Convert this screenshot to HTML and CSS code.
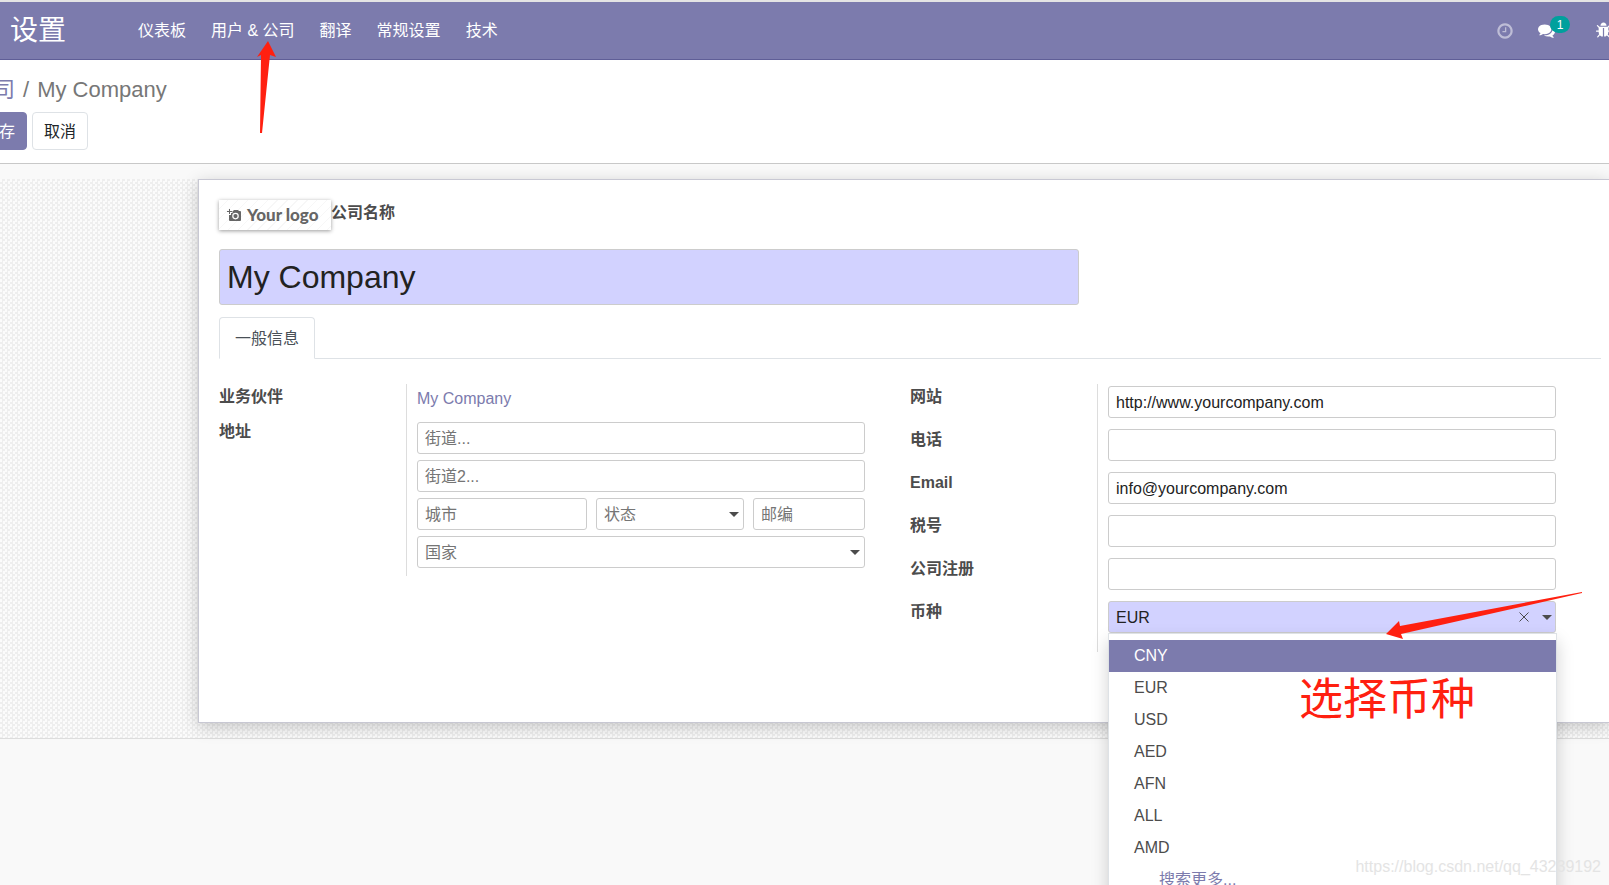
FILE: index.html
```html
<!DOCTYPE html>
<html lang="zh-CN">
<head>
<meta charset="utf-8">
<meta name="viewport" content="width=device-width, initial-scale=1">
<title>My Company - 设置</title>
<link rel="stylesheet" href="styles.css">
</head>
<body>
<div class="page">
  <header class="navbar">
    <a class="brand" href="#">设置</a>
    <nav class="menu">
      <a href="#">仪表板</a>
      <a href="#">用户 &amp; 公司</a>
      <a href="#">翻译</a>
      <a href="#">常规设置</a>
      <a href="#">技术</a>
    </nav>
    <div class="systray">
      <button class="tray-btn dim" type="button" aria-label="活动">
        <svg class="icon" viewBox="0 0 1792 1792"><path d="M1024 544v448q0 14-9 23t-23 9h-320q-14 0-23-9t-9-23v-64q0-14 9-23t23-9h224v-352q0-14 9-23t23-9h64q14 0 23 9t9 23zm416 352q0-148-73-273t-198-198-273-73-273 73-198 198-73 273 73 273 198 198 273 73 273-73 198-198 73-273zm224 0q0 209-103 385.500t-279.500 279.500-385.500 103-385.500-103-279.500-279.500-103-385.500 103-385.500 279.500-279.500 385.500-103 385.500 103 279.500 279.500 103 385.500z"/></svg>
      </button>
      <button class="tray-btn" type="button" aria-label="消息">
        <svg class="icon" viewBox="0 0 1792 1792"><path d="M1408 768q0 139-94 257t-256.500 186.500-353.500 68.500q-86 0-176-16-124 88-278 128-36 9-86 16h-3q-11 0-20.500-8t-11.500-21q-1-3-1-6.500t.5-6.500 2-6l2.500-5 3.500-5.500 4-5 4.500-5 4-4.500q5-6 23-25t26-29.500 22.500-29 25-38.500 20.500-44q-124-72-195-177t-71-224q0-139 94-257t256.500-186.500 353.500-68.500 353.500 68.500 256.500 186.500 94 257zm384 256q0 120-71 224.500t-195 176.500q10 24 20.500 44t25 38.500 22.500 29 26 29.500 23 25q1 1 4 4.500t4.500 5 4 5 3.500 5.500l2.500 5 2 6 .5 6.500-1 6.500q-3 14-13 22t-22 7q-50-7-86-16-154-40-278-128-90 16-176 16-271 0-472-132 58 4 88 4 161 0 309-45t264-129q125-92 192-212t67-254q0-77-23-152 129 71 204 178t75 230z"/></svg>
        <span class="badge">1</span>
      </button>
      <button class="tray-btn" type="button" aria-label="调试">
        <svg class="icon" viewBox="0 0 1792 1792"><path d="M1696 960q0 26-19 45t-45 19h-224q0 171-67 290l208 209q19 19 19 45t-19 45q-18 19-45 19t-45-19l-198-197q-5 5-15 13t-42 28.500-65 36.500-82 29-97 13v-896h-128v896q-51 0-101.500-13.500t-87-33-66-39-43.500-32.500l-15-14-183 207q-20 21-48 21-24 0-43-16-19-18-20.500-44.500t15.500-46.500l202-227q-58-114-58-274h-224q-26 0-45-19t-19-45 19-45 45-19h224v-294l-173-173q-19-19-19-45t19-45 45-19 45 19l173 173h844l173-173q19-19 45-19t45 19 19 45-19 45l-173 173v294h224q26 0 45 19t19 45zm-480-576h-640q0-133 93.500-226.500t226.500-93.500 226.500 93.500 93.500 226.500z"/></svg>
      </button>
    </div>
  </header>

  <section class="control-panel">
    <div class="breadcrumb"><a href="#">公司</a><span class="sep">/</span><span>My Company</span></div>
    <div class="actions">
      <button class="btn primary" type="button">保存</button>
      <button class="btn" type="button">取消</button>
    </div>
  </section>

  <main class="content">
    <form class="form-view">
      <div class="sheet">
        <div class="heading">
          <div class="logo">
            <svg class="camera" viewBox="0 0 14 13"><path fill-rule="evenodd" d="M2 0h1v2h2v1H3v2H2V3H0V2h2zM5.500 2H6l1-1h4l1 1h1q1 0 1 1v8q0 1-1 1H3q-1 0-1-1V6h2V4h1.500zM8.500 3.800a3.300 3.300 0 1 0 0 6.600 3.300 3.300 0 0 0 0-6.600zM8.500 5a2.100 2.100 0 1 1 0 4.200 2.100 2.100 0 0 1 0-4.200z"/><circle cx="8.500" cy="7.100" r="1"/></svg>
            <span>Your logo</span>
          </div>
          <label class="label" for="name">公司名称</label>
        </div>
        <input class="field name required" id="name" type="text" value="My Company">
        <div class="tabs"><button class="tab" type="button">一般信息</button></div>

        <div class="groups">
          <div class="group">
            <div class="row short">
              <span class="label">业务伙伴</span>
              <div class="cell partner"><a href="#">My Company</a></div>
            </div>
            <div class="row">
              <label class="label" for="street">地址</label>
              <div class="cell address">
                <input class="field" id="street" type="text" placeholder="街道...">
                <input class="field" type="text" placeholder="街道2..." aria-label="街道2">
                <div class="city-row">
                  <input class="field" type="text" placeholder="城市" aria-label="城市">
                  <select class="field" aria-label="状态"><option>状态</option></select>
                  <input class="field" type="text" placeholder="邮编" aria-label="邮编">
                </div>
                <select class="field" aria-label="国家"><option>国家</option></select>
              </div>
            </div>
          </div>

          <div class="group">
            <div class="row"><label class="label" for="website">网站</label><div class="cell"><input class="field" id="website" type="text" value="http://www.yourcompany.com"></div></div>
            <div class="row"><label class="label" for="phone">电话</label><div class="cell"><input class="field" id="phone" type="text"></div></div>
            <div class="row"><label class="label" for="email">Email</label><div class="cell"><input class="field" id="email" type="text" value="info@yourcompany.com"></div></div>
            <div class="row"><label class="label" for="vat">税号</label><div class="cell"><input class="field" id="vat" type="text"></div></div>
            <div class="row"><label class="label" for="registry">公司注册</label><div class="cell"><input class="field" id="registry" type="text"></div></div>
            <div class="row">
              <label class="label" for="currency">币种</label>
              <div class="cell">
                <div class="combo">
                  <input class="field required" id="currency" type="text" value="EUR" role="combobox" aria-expanded="true" aria-controls="currency-list">
                  <div class="combo-icons">
                    <svg class="clear" viewBox="0 0 10 10"><path d="M.5.5l9 9M9.500.5l-9 9"/></svg>
                    <svg class="caret" viewBox="0 0 10 5"><path d="M0 0h10L5 5z"/></svg>
                  </div>
                  <ul class="options" id="currency-list" role="listbox">
                    <li class="active" role="option" aria-selected="true">CNY</li>
                    <li role="option">EUR</li>
                    <li role="option">USD</li>
                    <li role="option">AED</li>
                    <li role="option">AFN</li>
                    <li role="option">ALL</li>
                    <li role="option">AMD</li>
                    <li class="more" role="option">搜索更多...</li>
                  </ul>
                  <div class="note">选择币种</div>
                  <svg class="arrow-currency" viewBox="0 0 200 48"><path d="M1 42L14 29l1 5L197 0v1L16 42l2 5z"/></svg>
                </div>
              </div>
            </div>
          </div>
        </div>
      </div>
    </form>
  </main>

  <svg class="arrow-menu" viewBox="0 0 20 94"><path d="M11 1l8 16-6-2-8 78H3L4 15l-4 2z"/></svg>
  <div class="watermark">https://blog.csdn.net/qq_43239192</div>
</div>
</body>
</html>
```

FILE: styles.css
```css
* { box-sizing: border-box; }

body {
  margin: 0;
  overflow: hidden;
  background: #f9f9f9;
  color: #4c4c4c;
  font: 16px/24px "Liberation Sans", "Noto Sans CJK SC", sans-serif;
}

a { color: #7c7bad; text-decoration: none; }
button, input, select { font: inherit; }

.page {
  position: relative;
  min-height: 100vh;
  overflow: hidden;
}

/* Top navigation */
.navbar {
  display: flex;
  align-items: center;
  height: 60px;
  border-top: 2px solid #e4e4e4;
  border-bottom: 1px solid #5f5e97;
  background: #7c7bad;
}
.navbar a { color: #fff; }
.brand {
  width: 128px;
  padding-left: 10px;
  font-size: 28px;
  line-height: 40px;
}
.menu { display: flex; }
.menu a { padding: 0 15px 0 10px; }
.systray {
  display: flex;
  gap: 24px;
  margin-left: auto;
  margin-right: -3px;
}
.tray-btn {
  position: relative;
  display: flex;
  align-items: center;
  padding: 0;
  border: 0;
  background: none;
  color: #fff;
}
.tray-btn + .tray-btn + .tray-btn { margin-left: 16px; }
.tray-btn.dim { opacity: .5; }
.icon { width: 17px; height: 17px; fill: currentColor; }
.dim .icon { width: 18px; height: 18px; }
.badge {
  position: absolute;
  top: -6px;
  left: 12px;
  width: 20px;
  height: 17px;
  border-radius: 9px;
  background: #00a09d;
  font-size: 12px;
  line-height: 18px;
}

/* Control panel: starts left of the window edge */
.control-panel {
  height: 104px;
  padding-top: 16px;
  border-bottom: 1px solid #c8c8c8;
  background: #fff;
}
.breadcrumb {
  margin-left: -29px;
  font-size: 22px;
  line-height: 28px;
  color: #777;
}
.breadcrumb .sep { padding: 0 8px; }
.actions {
  display: flex;
  gap: 5px;
  margin: 8px 0 0 -29px;
}
.btn {
  height: 38px;
  padding: 1px 11px 0;
  border: 1px solid #dee2e6;
  border-radius: 4px;
  background: #fff;
  color: #212529;
}
.btn.primary { border-color: #7c7bad; background: #7c7bad; color: #fff; }

/* Form */
.content { padding-top: 15px; }
.form-view {
  padding: 0 0 15px 198px;
  border-bottom: 1px solid #ddd;
  background: repeating-conic-gradient(#eeeeee 0 25%, #fbfbfb 0 50%) 0 0 / 5px 5px;
}
.sheet {
  padding: 20px 8px 70px 20px;
  border: 1px solid #c8c8d3;
  border-right: 0;
  background: #fff;
  box-shadow: 0 4px 16px rgba(0, 0, 0, .2);
}
.heading {
  display: flex;
  margin-bottom: 19px;
}
.logo {
  display: flex;
  align-items: center;
  gap: 6px;
  width: 112px;
  height: 30px;
  padding-left: 8px;
  background: repeating-linear-gradient(135deg, #fff 0 6px, #f7f7f7 6px 7px);
  box-shadow: 0 1px 4px rgba(0, 0, 0, .4);
  color: #666;
  font: 900 17px/30px Lato, sans-serif;
}
.camera { width: 14px; height: 13px; fill: #666; }

.field {
  display: block;
  width: 100%;
  min-width: 0;
  height: 32px;
  padding: 1px 7px 0;
  border: 1px solid #ccc;
  border-radius: 3px;
  outline: 0;
  background: #fff;
  color: #222;
}
.field::placeholder { color: #757575; opacity: 1; }
.field.required { background: #d2d2ff; }
.field.name {
  width: 62.25%;
  height: 56px;
  font-size: 32px;
}
select.field {
  appearance: none;
  color: #757575;
  background: #fff url("data:image/svg+xml,%3Csvg xmlns='http://www.w3.org/2000/svg' viewBox='0 0 10 5'%3E%3Cpath fill='%234c4c4c' d='M0 0h10L5 5z'/%3E%3C/svg%3E") no-repeat right 4px center / 10px 5px;
}

.tabs {
  display: flex;
  margin: 12px 0 25px;
  border-bottom: 1px solid #dee2e6;
}
.tab {
  height: 42px;
  margin-bottom: -1px;
  padding: 1px 15px 0;
  border: 1px solid #dee2e6;
  border-bottom-color: #fff;
  border-radius: 4px 4px 0 0;
  background: #fff;
  color: #495057;
}

.groups {
  display: grid;
  grid-template-columns: 1fr 1fr;
  align-items: start;
}
.group { padding-right: 45px; }
.row { display: grid; grid-template-columns: 187px 1fr; }
.label { padding-top: 1px; font-weight: 700; }
.cell {
  padding: 2px 0 9px 10px;
  border-left: 1px solid #ddd;
}
.cell.partner { padding-top: 3px; }
.row.short { height: 35px; }
.address {
  display: grid;
  gap: 6px;
  padding: 3px 0 8px 10px;
}
.city-row {
  display: grid;
  grid-template-columns: 170fr 148fr 112fr;
  gap: 9px;
}
.group > .row:last-child .cell:not(.address) { padding-bottom: 19px; }

/* Currency drop-down */
.combo { position: relative; }
.combo-icons {
  position: absolute;
  top: 0;
  right: 4px;
  display: flex;
  align-items: center;
  gap: 13px;
  height: 32px;
}
.clear { width: 10px; height: 10px; fill: none; stroke: #4c4c4c; }
.caret { width: 10px; height: 5px; fill: #4c4c4c; }
.options {
  position: absolute;
  top: 32px;
  left: 0;
  right: -1px;
  z-index: 1;
  margin: 0;
  padding: 6px 0;
  border: 1px solid #dee2e6;
  background: #fff;
  box-shadow: 0 8px 16px rgba(0, 0, 0, .18);
  list-style: none;
}
.options li { padding: 4px 25px; }
.options .active { background: #7c7bad; color: #fff; }
.options .more { padding-left: 50px; color: #7c7bad; }

/* Annotations */
.note {
  position: absolute;
  top: 73px;
  right: 81px;
  z-index: 2;
  color: #ff2010;
  font-size: 44px;
  line-height: 52px;
}
.arrow-currency {
  position: absolute;
  top: -9px;
  right: -29px;
  z-index: 2;
  width: 200px;
  height: 48px;
  fill: #ff2010;
}
.arrow-menu {
  position: absolute;
  top: 40px;
  left: 257px;
  width: 20px;
  height: 94px;
  fill: #ff2010;
}
.watermark {
  position: absolute;
  right: 8px;
  bottom: 6px;
  z-index: 3;
  color: #e4e4e4;
}
```
